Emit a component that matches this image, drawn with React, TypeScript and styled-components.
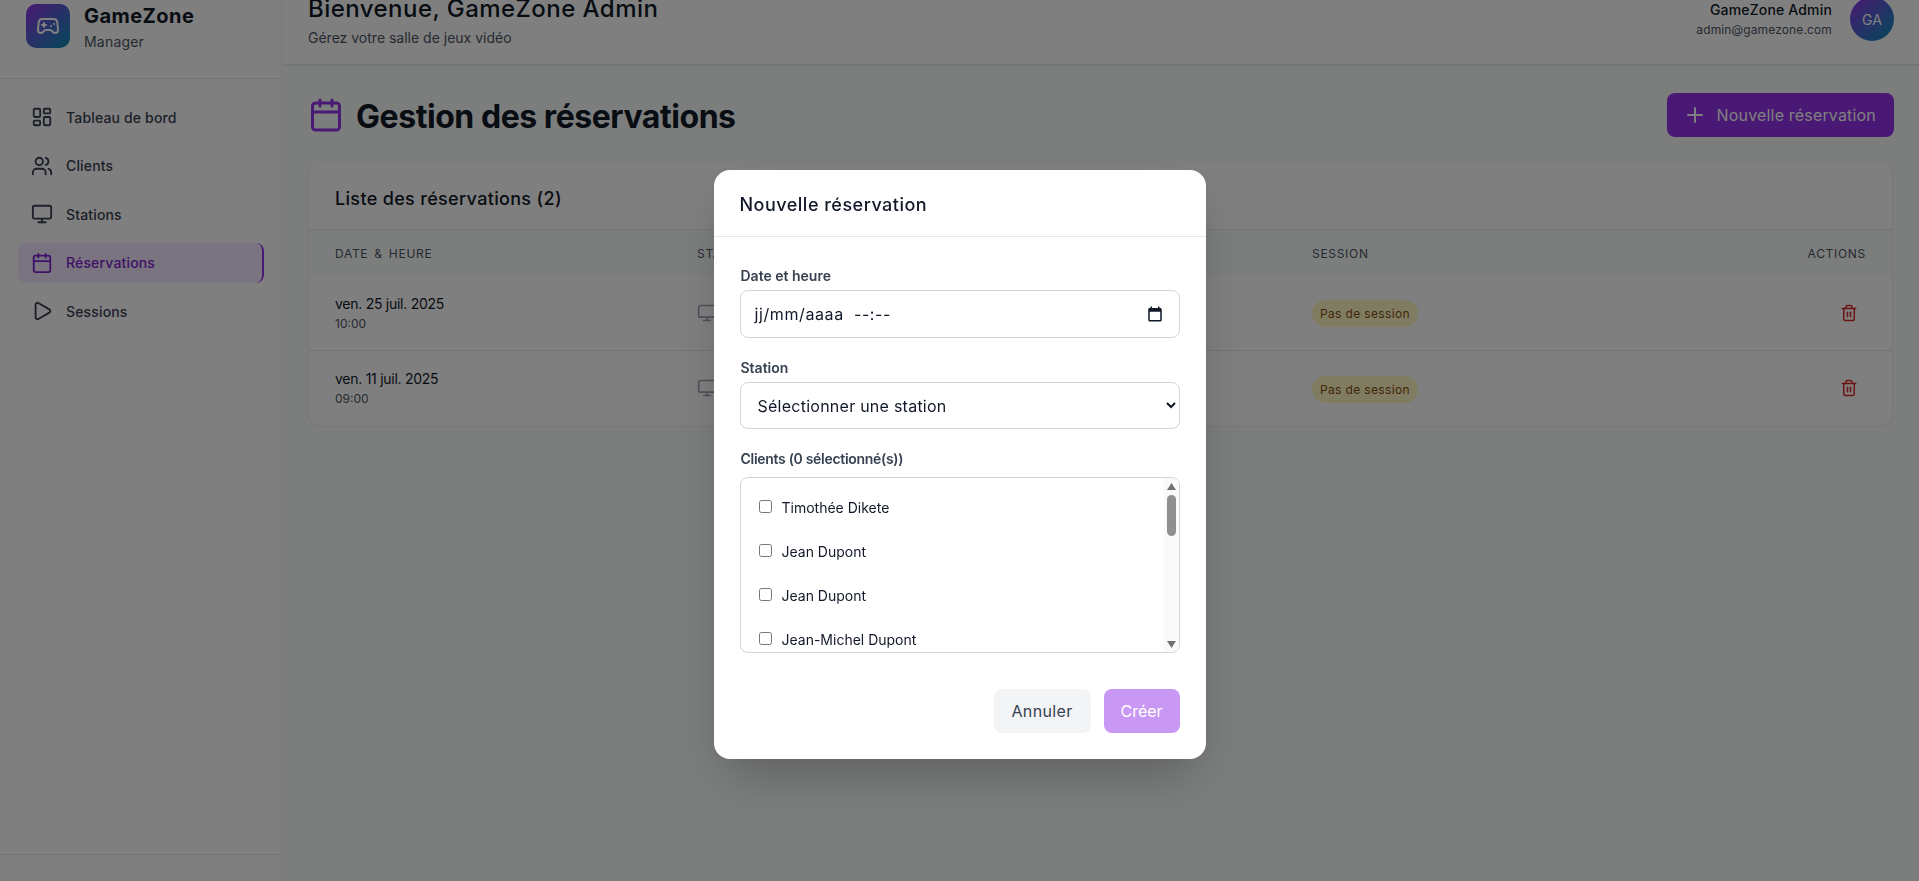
import React from 'react';
import styled, { createGlobalStyle } from 'styled-components';
import { Calendar, Gamepad2, LayoutDashboard, Monitor, Play, Plus, Trash2, Users } from 'lucide-react';

const GlobalStyle = createGlobalStyle`
  html, body {
    margin: 0;
    height: 100%;
    overflow: hidden;
    font-family: Inter, "Noto Sans", sans-serif;
    color: #111827;
    background: #f9fafb;
  }
  * { box-sizing: border-box; }
`;

const brandGradient = 'linear-gradient(135deg, #9333ea, #0891b2)';

// the page was scrolled a little when captured
const Shell = styled.div`
  display: flex;
  height: 905px;
  margin-top: -24px;
`;

const Sidebar = styled.aside`
  width: 282px;
  flex-shrink: 0;
  display: flex;
  flex-direction: column;
  background: #fff;
  border-right: 1px solid #f3f4f6;
`;

const Brand = styled.div`
  height: 103px;
  padding: 28px 26px 0;
  display: flex;
  gap: 14px;
  border-bottom: 1px solid #e5e7eb;
`;

const BrandLogo = styled.div`
  width: 44px;
  height: 44px;
  border-radius: 10px;
  background: ${brandGradient};
  color: #fff;
  display: flex;
  align-items: center;
  justify-content: center;
`;

const BrandName = styled.div`
  font-size: 20px;
  font-weight: 700;
  line-height: 24px;
  letter-spacing: 0.45px;
`;

const BrandSub = styled.div`
  font-size: 14px;
  line-height: 20px;
  margin-top: 4px;
  letter-spacing: 0.2px;
  color: #4b5563;
`;

const Nav = styled.nav`
  flex: 1;
  display: flex;
  flex-direction: column;
  gap: 8.5px;
  padding: 18px 18px 0;
`;

const NavItem = styled.div<{ $active?: boolean }>`
  height: 40px;
  display: flex;
  align-items: center;
  gap: 13px;
  padding-left: 13px;
  width: 246px;
  border-radius: 8px;
  font-size: 14px;
  font-weight: 500;
  letter-spacing: 0.16px;
  color: ${({ $active }) => ($active ? '#7e22ce' : '#374151')};
  background: ${({ $active }) => ($active ? '#f3e8ff' : 'transparent')};
  border-right: ${({ $active }) => ($active ? '2px solid #9333ea' : '0')};
`;

const SidebarFoot = styled.div`
  height: 27px;
  border-top: 1px solid #e5e7eb;
`;

const Main = styled.div`
  flex: 1;
  min-width: 0;
  display: flex;
  flex-direction: column;
`;

const TopBar = styled.header`
  height: 89px;
  padding: 0 25px 2px 26px;
  display: flex;
  align-items: center;
  justify-content: space-between;
  background: #fff;
  border-bottom: 1px solid #e5e7eb;
  box-shadow: 0 1px 2px rgba(0, 0, 0, 0.05);
`;

const WelcomeBlock = styled.div`
  padding-top: 3px;
`;

const Welcome = styled.h1`
  margin: 0;
  font-size: 24px;
  font-weight: 500;
  line-height: 32px;
  letter-spacing: 0.45px;
`;

const Sub = styled.p`
  margin: 3px 0 0;
  font-size: 14px;
  line-height: 20px;
  color: #4b5563;
`;

const UserBox = styled.div`
  display: flex;
  align-items: center;
  gap: 18px;
  text-align: right;
`;

const UserText = styled.div`
  padding-top: 2px;
`;

const UserName = styled.div`
  font-size: 14px;
  font-weight: 500;
  line-height: 20px;
  letter-spacing: 0.17px;
`;

const UserMail = styled.div`
  font-size: 12px;
  line-height: 20px;
  letter-spacing: 0.13px;
  color: #4b5563;
`;

const Avatar = styled.div`
  width: 44px;
  height: 44px;
  border-radius: 50%;
  background: ${brandGradient};
  color: #fff;
  font-size: 14px;
  display: flex;
  align-items: center;
  justify-content: center;
`;

const Content = styled.main`
  padding: 28px 25px 0 26px;
`;

const TitleRow = styled.div`
  display: flex;
  align-items: center;
  justify-content: space-between;
  margin-bottom: 26px;
`;

const PageTitle = styled.h2`
  margin: 0;
  display: flex;
  align-items: center;
  gap: 12px;
  font-size: 32px;
  font-weight: 700;
  svg { color: #9333ea; }
`;

const PageTitleText = styled.span`
  padding-top: 4px;
  line-height: 40px;
  letter-spacing: -0.45px;
`;

const PrimaryButton = styled.button`
  height: 44px;
  display: flex;
  align-items: center;
  gap: 10px;
  padding: 0 18px 0 16px;
  border: 0;
  border-radius: 8px;
  background: #9333ea;
  color: #fff;
  font: 16px Inter, sans-serif;
  letter-spacing: 0.18px;
`;

const Card = styled.section`
  margin-right: 1px;
  background: #fff;
  border: 1px solid #f3f4f6;
  border-radius: 12px;
  box-shadow: 0 1px 2px rgba(0, 0, 0, 0.05);
  overflow: hidden;
`;

const CardTitle = styled.h3`
  margin: 0;
  height: 66px;
  padding: 4px 26px 0;
  display: flex;
  align-items: center;
  font-size: 18px;
  font-weight: 500;
  letter-spacing: 0.33px;
  border-bottom: 1px solid #e5e7eb;
`;

const Row = styled.div`
  display: grid;
  grid-template-columns: 362px 307px 308px 1fr 100px;
  align-items: center;
  padding: 2px 26px 0;
`;

const HeadRow = styled(Row)`
  height: 45px;
  background: #f9fafb;
  font-size: 12px;
  letter-spacing: 0.7px;
  word-spacing: 2px;
  text-transform: uppercase;
  color: #4b5563;
`;

const BodyRow = styled(Row)`
  height: 75px;
  & + & { border-top: 1px solid #e5e7eb; }
`;

const ActionsHead = styled.div`
  text-align: right;
`;

const DateMain = styled.div`
  font-size: 14px;
  line-height: 20px;
  letter-spacing: -0.27px;
`;

const DateTime = styled.div`
  font-size: 12px;
  line-height: 20px;
  color: #4b5563;
`;

const StationIcon = styled.div`
  margin-top: -2px;
  color: #9ca3af;
  display: flex;
`;

const Pill = styled.span`
  display: inline-flex;
  height: 27px;
  align-items: center;
  padding: 0 8px;
  border-radius: 14px;
  background: #fef9c3;
  color: #854d0e;
  font-size: 12px;
  letter-spacing: 0.35px;
`;

const DeleteCell = styled.div`
  margin-top: -2px;
  display: flex;
  justify-content: flex-end;
  padding-right: 8px;
  color: #dc2626;
`;

const Overlay = styled.div`
  position: fixed;
  inset: 0;
  padding-top: 48px;
  display: flex;
  align-items: center;
  justify-content: center;
  background: rgba(0, 0, 0, 0.5);
`;

const Modal = styled.div`
  width: 492px;
  height: 589px;
  background: #fff;
  border-radius: 16px;
  box-shadow: 0 25px 50px -12px rgba(0, 0, 0, 0.25);
`;

const ModalHead = styled.div`
  height: 67px;
  padding: 2px 26px 0;
  display: flex;
  align-items: center;
  font-size: 18px;
  font-weight: 500;
  letter-spacing: 0.49px;
  border-bottom: 1px solid #e5e7eb;
`;

const ModalBody = styled.form`
  padding: 29px 26px 0;
`;

const Field = styled.div`
  margin-bottom: 20px;
`;

const Label = styled.div`
  margin-bottom: 4px;
  padding-left: 1px;
  font-size: 14px;
  font-weight: 600;
  line-height: 20px;
  color: #374151;
`;

const ClientsLabel = styled(Label)`
  margin-bottom: 8px;
  letter-spacing: -0.3px;
`;

const DateBox = styled.div`
  height: 48px;
  padding: 0 15px 0 14px;
  display: flex;
  align-items: center;
  justify-content: space-between;
  border: 1px solid #d1d5db;
  border-radius: 8px;
  font-size: 16px;
  color: #111827;
`;

const DateMask = styled.span`
  white-space: pre;
  letter-spacing: 0.6px;
`;

const Select = styled.select`
  display: block;
  width: 100%;
  height: 47px;
  padding: 0 9px 0 13px;
  border: 1px solid #d1d5db;
  border-radius: 8px;
  background: #fff;
  color: #111827;
  font: 16px Inter, sans-serif;
  letter-spacing: 0.25px;
`;

const ClientBox = styled.div`
  height: 176px;
  display: flex;
  border: 1px solid #d1d5db;
  border-radius: 8px;
  overflow: hidden;
`;

const ClientRows = styled.div`
  flex: 1;
  padding: 7px 0 0 8px;
`;

const ClientRow = styled.label`
  height: 44px;
  display: flex;
  align-items: center;
  gap: 10px;
  padding-left: 10px;
  font-size: 14px;
  color: #111827;

  input { width: 13px; height: 13px; margin: -2px 0 0; }
`;

const ScrollTrack = styled.div`
  width: 15px;
  display: flex;
  flex-direction: column;
  align-items: center;
  background: #fafafa;
`;

const ScrollArrow = styled.svg<{ $down?: boolean }>`
  flex-shrink: 0;
  margin: ${({ $down }) => ($down ? 'auto 0 4px' : '5px 0 0')};
  fill: #707070;
`;

const ScrollThumb = styled.div`
  width: 9px;
  height: 41px;
  margin-top: 5px;
  border-radius: 5px;
  background: #8f8f8f;
`;

const ModalActions = styled.div`
  display: flex;
  justify-content: flex-end;
  gap: 13px;
  margin-top: 36px;
`;

const CancelButton = styled.button`
  height: 44px;
  width: 97px;
  border: 0;
  border-radius: 8px;
  background: #f3f4f6;
  color: #374151;
  font: 16px Inter, sans-serif;
  letter-spacing: 0.35px;
`;

const SubmitButton = styled.button`
  height: 44px;
  width: 76px;
  border: 0;
  border-radius: 8px;
  background: #9333ea;
  opacity: 0.5;
  color: #fff;
  font: 16px Inter, sans-serif;
`;

const navItems = [
  { label: 'Tableau de bord', icon: LayoutDashboard },
  { label: 'Clients', icon: Users },
  { label: 'Stations', icon: Monitor },
  { label: 'Réservations', icon: Calendar, active: true },
  { label: 'Sessions', icon: Play },
];

const reservations = [
  { date: 'ven. 25 juil. 2025', time: '10:00' },
  { date: 'ven. 11 juil. 2025', time: '09:00' },
];

const clients = ['Timothée Dikete', 'Jean Dupont', 'Jean Dupont', 'Jean-Michel Dupont'];

export default function App() {
  return (
    <div>
      <GlobalStyle />
      <Shell>
        <Sidebar>
          <Brand>
            <BrandLogo>
              <Gamepad2 size={24} />
            </BrandLogo>
            <div>
              <BrandName>GameZone</BrandName>
              <BrandSub>Manager</BrandSub>
            </div>
          </Brand>
          <Nav>
            {navItems.map(({ label, icon: Icon, active }) => (
              <NavItem key={label} $active={active}>
                <Icon size={22} />
                {label}
              </NavItem>
            ))}
          </Nav>
          <SidebarFoot />
        </Sidebar>
        <Main>
          <TopBar>
            <WelcomeBlock>
              <Welcome>Bienvenue, GameZone Admin</Welcome>
              <Sub>Gérez votre salle de jeux vidéo</Sub>
            </WelcomeBlock>
            <UserBox>
              <UserText>
                <UserName>GameZone Admin</UserName>
                <UserMail>admin@gamezone.com</UserMail>
              </UserText>
              <Avatar>GA</Avatar>
            </UserBox>
          </TopBar>
          <Content>
            <TitleRow>
              <PageTitle>
                <Calendar size={36} />
                <PageTitleText>Gestion des réservations</PageTitleText>
              </PageTitle>
              <PrimaryButton>
                <Plus size={24} />
                Nouvelle réservation
              </PrimaryButton>
            </TitleRow>
            <Card>
              <CardTitle>Liste des réservations (2)</CardTitle>
              <HeadRow>
                <div>Date &amp; heure</div>
                <div>Station</div>
                <div>Clients</div>
                <div>Session</div>
                <ActionsHead>Actions</ActionsHead>
              </HeadRow>
              {reservations.map((r) => (
                <BodyRow key={r.date}>
                  <div>
                    <DateMain>{r.date}</DateMain>
                    <DateTime>{r.time}</DateTime>
                  </div>
                  <StationIcon>
                    <Monitor size={20} />
                  </StationIcon>
                  <div />
                  <div>
                    <Pill>Pas de session</Pill>
                  </div>
                  <DeleteCell>
                    <Trash2 size={18} />
                  </DeleteCell>
                </BodyRow>
              ))}
            </Card>
          </Content>
        </Main>
      </Shell>
      <Overlay>
        <Modal>
          <ModalHead>Nouvelle réservation</ModalHead>
          <ModalBody>
            <Field>
              <Label>Date et heure</Label>
              <DateBox>
                <DateMask>jj/mm/aaaa  --:--</DateMask>
                <svg width="18" height="18" viewBox="0 0 24 24" fill="#111827">
                  <path d="M19 4h-1V2h-2v2H8V2H6v2H5c-1.1 0-2 .9-2 2v14c0 1.1.9 2 2 2h14c1.1 0 2-.9 2-2V6c0-1.1-.9-2-2-2zm0 16H5V9h14v11z" />
                </svg>
              </DateBox>
            </Field>
            <Field>
              <Label>Station</Label>
              <Select>
                <option>Sélectionner une station</option>
              </Select>
            </Field>
            <ClientsLabel>Clients (0 sélectionné(s))</ClientsLabel>
            <ClientBox>
              <ClientRows>
                {clients.map((name, i) => (
                  <ClientRow key={i}>
                    <input type="checkbox" />
                    {name}
                  </ClientRow>
                ))}
              </ClientRows>
              <ScrollTrack>
                <ScrollArrow width="9" height="7" viewBox="0 0 9 7">
                  <path d="M4.5 0L9 7H0z" />
                </ScrollArrow>
                <ScrollThumb />
                <ScrollArrow $down width="9" height="7" viewBox="0 0 9 7">
                  <path d="M4.5 7L9 0H0z" />
                </ScrollArrow>
              </ScrollTrack>
            </ClientBox>
            <ModalActions>
              <CancelButton type="button">Annuler</CancelButton>
              <SubmitButton type="button" disabled>
                Créer
              </SubmitButton>
            </ModalActions>
          </ModalBody>
        </Modal>
      </Overlay>
    </div>
  );
}
